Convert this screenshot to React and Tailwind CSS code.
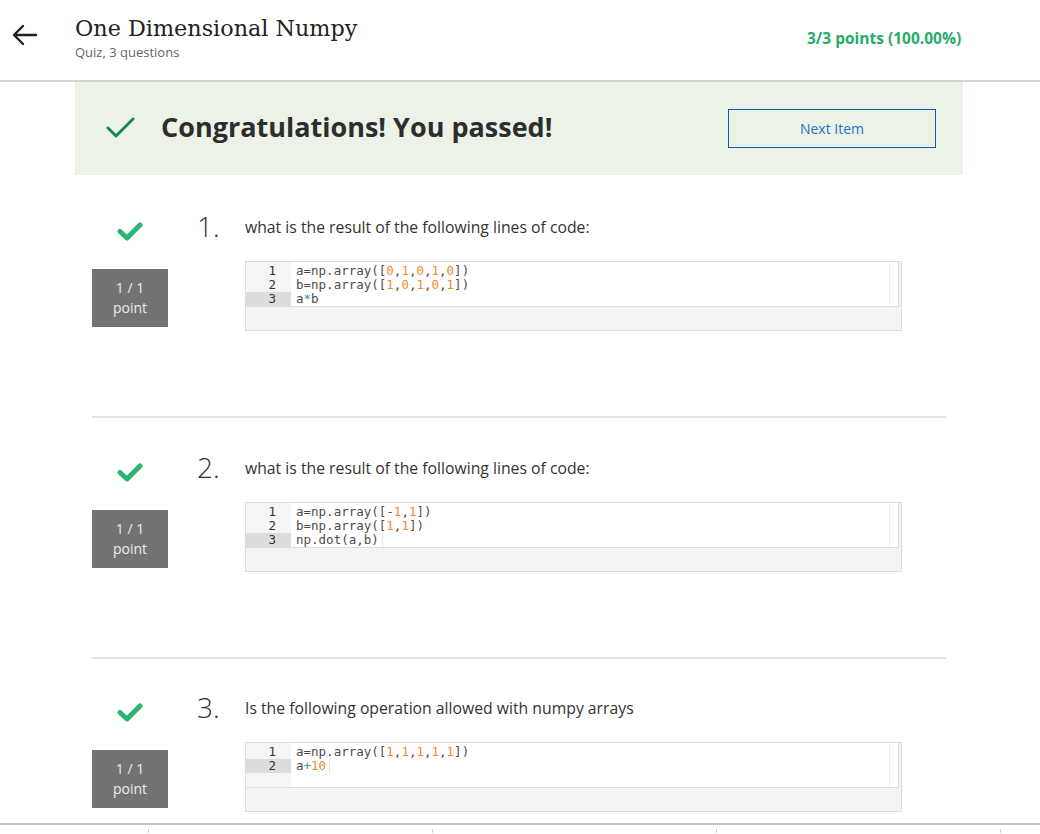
import React from "react";

const O = "text-[#f5871f]";
const T = "text-[#3e999f]";

function Tok({ parts }) {
  return (
    <>
      {parts.map((p, i) =>
        typeof p === "string" ? (
          <span key={i}>{p}</span>
        ) : (
          <span key={i} className={p[1]}>
            {p[0]}
          </span>
        )
      )}
    </>
  );
}

const arr = (nums) => {
  const out = ["["];
  nums.forEach((n, i) => {
    if (i > 0) out.push(",");
    out.push([n, O]);
  });
  out.push("])");
  return out;
};

const questions = [
  {
    n: "1.",
    text: "what is the result of the following lines of code:",
    lines: [
      ["a=np.array(", ...arr(["0", "1", "0", "1", "0"])],
      ["b=np.array(", ...arr(["1", "0", "1", "0", "1"])],
      ["a", ["*", T], "b"],
    ],
    cursor: false,
    pt: "pt-[36px]",
  },
  {
    n: "2.",
    text: "what is the result of the following lines of code:",
    lines: [
      ["a=np.array([-", ["1", O], ",", ["1", O], "])"],
      ["b=np.array(", ...arr(["1", "1"])],
      ["np.dot(a,b)"],
    ],
    cursor: true,
    pt: "pt-[34px]",
  },
  {
    n: "3.",
    text: "Is the following operation allowed with numpy arrays",
    lines: [
      ["a=np.array(", ...arr(["1", "1", "1", "1", "1"])],
      ["a", ["+", T], ["10", O]],
    ],
    cursor: true,
    pt: "pt-[33px]",
  },
];

function GreenCheck() {
  return (
    <svg width="26" height="19" viewBox="0 0 26 19" className="mt-[11px]">
      <polyline
        points="3,9.5 10,16 23,3"
        fill="none"
        stroke="#2bb673"
        strokeWidth="5"
        strokeLinecap="round"
        strokeLinejoin="round"
      />
    </svg>
  );
}

function CodeBox({ lines, cursor }) {
  const rows = Math.max(lines.length, 3);
  return (
    <div className="mt-[18px] ml-[48px] w-[657px] h-[70px] border border-[#dcdcdc] bg-[#f4f4f4]">
      <div className="flex h-[45px] mr-[2px] bg-white border-b border-r border-[#dcdcdc] font-['DejaVu_Sans_Mono',monospace] text-[12.5px] leading-[14px]">
        <div className="w-[45px] bg-[#f5f5f5] pt-[2px] text-[#333]">
          {Array.from({ length: rows }).map((_, i) => (
            <div
              key={i}
              className={
                "h-[14px] text-right pr-[15px] " +
                (i === lines.length - 1 ? "bg-[#dcdcdc]" : "")
              }
            >
              {i < lines.length ? i + 1 : ""}
            </div>
          ))}
        </div>
        <div className="flex-1 pt-[2px] pl-[5px] text-[#4d4d4c]">
          {lines.map((l, i) => (
            <div key={i} className="h-[14px] whitespace-pre flex">
              <span>
                <Tok parts={l} />
              </span>
              {cursor && i === lines.length - 1 && (
                <span className="ml-[3px] w-px h-[14px] bg-[#e2e2e2]" />
              )}
            </div>
          ))}
        </div>
        <div className="w-[9px] border-l border-[#f0f0f0]" />
      </div>
    </div>
  );
}

function Question({ q, last }) {
  return (
    <>
      <div className={"flex " + q.pt + (last ? " pb-[11px]" : " pb-[85px]")}>
        <div className="w-[76px] flex flex-col items-center">
          <GreenCheck />
          <div className="mt-[28px] w-[76px] h-[58px] bg-[#737373] text-[#ececec] text-[14px] leading-[20px] flex flex-col items-center justify-center">
            <div>1 / 1</div>
            <div>point</div>
          </div>
        </div>
        <div className="ml-[29px] flex-1">
          <div className="flex items-center h-[32px]">
            <span className="w-[48px] text-[28px] font-light text-[#333] leading-[32px] -mt-[2px]">
              {q.n}
            </span>
            <span className="text-[15.75px] text-[#333] mt-[2px]">{q.text}</span>
          </div>
          <CodeBox lines={q.lines} cursor={q.cursor} />
        </div>
      </div>
      {!last && <div className="w-[854px] h-[2px] bg-[#e2e2e2]" />}
    </>
  );
}

export default function App() {
  return (
    <div className="w-[1040px] bg-white font-['Open_Sans',sans-serif] text-[#333]">
      <header className="h-[82px] border-b-2 border-[#d4d4d4] flex">
        <div className="w-[75px] pt-[24px] pl-[12px]">
          <svg width="26" height="22" viewBox="0 0 26 22">
            <path
              d="M24 11H3 M11 2 L2 11 L11 20"
              fill="none"
              stroke="#1f1f1f"
              strokeWidth="2.4"
              strokeLinecap="round"
              strokeLinejoin="round"
            />
          </svg>
        </div>
        <div className="flex-1 pt-[12px]">
          <div className="font-['DejaVu_Serif',serif] text-[22.3px] leading-[32px] text-[#222]">
            One Dimensional Numpy
          </div>
          <div className="text-[13px] text-[#666] leading-[18px] mt-[-1px]">
            Quiz, 3 questions
          </div>
        </div>
        <div className="w-[233px] pt-[27px] text-[15.5px] font-bold text-[#2aa96b]">
          3/3 points (100.00%)
        </div>
      </header>
      <main className="pl-[75px]">
        <div className="w-[888px] h-[93px] bg-[#ebf3e7] flex items-center">
          <svg width="30" height="24" viewBox="0 0 30 24" className="ml-[31px] -mt-[2px]">
            <polyline
              points="2,12 10,20 27,3"
              fill="none"
              stroke="#1b8552"
              strokeWidth="3"
              strokeLinecap="round"
              strokeLinejoin="round"
            />
          </svg>
          <div className="ml-[25px] text-[27px] font-bold text-[#2d2d2d] -mt-[2px]">
            Congratulations! You passed!
          </div>
          <div className="ml-auto mr-[27px] w-[208px] h-[39px] border border-[#1558a8] text-[#2a6fc9] text-[14px] flex items-center justify-center">
            Next Item
          </div>
        </div>
        <div className="pl-[17px]">
          {questions.map((q, i) => (
            <Question key={i} q={q} last={i === questions.length - 1} />
          ))}
        </div>
      </main>
      <div className="border-t-2 border-[#c4c4c4] h-[10px] flex pl-[148px] gap-[283px] pt-[4px]">
        <div className="w-px h-[4px] bg-[#ccc]" />
        <div className="w-px h-[4px] bg-[#ccc]" />
        <div className="w-px h-[4px] bg-[#ccc]" />
        <div className="w-px h-[4px] bg-[#ccc]" />
      </div>
    </div>
  );
}
